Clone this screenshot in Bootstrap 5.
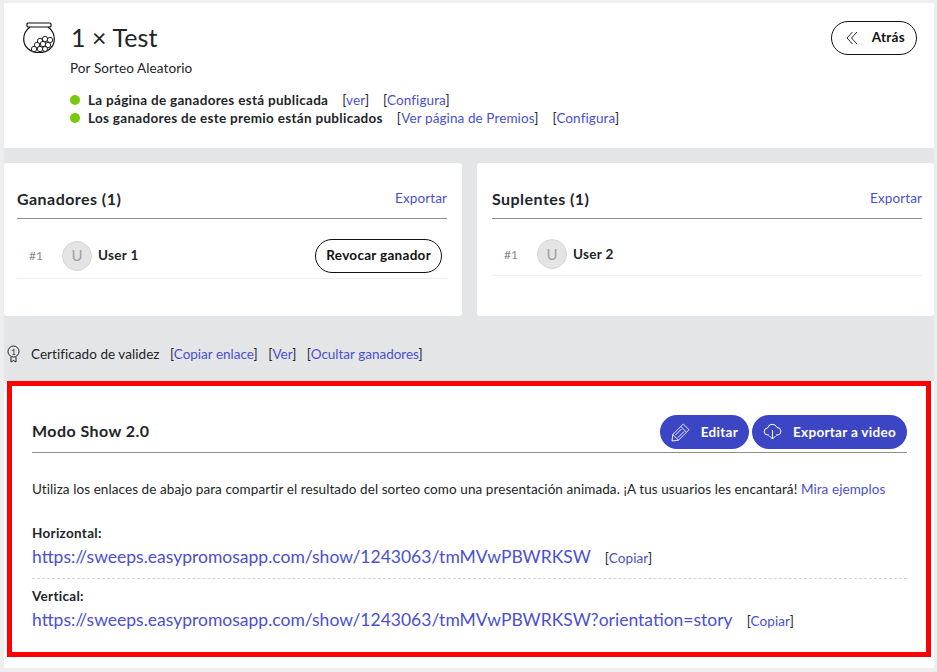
<!DOCTYPE html>
<html lang="es"><head><meta charset="utf-8"><title>Sorteo</title>
<link rel="stylesheet" href="https://cdn.jsdelivr.net/npm/bootstrap@5.3.0/dist/css/bootstrap.min.css">
<style>
html,body{height:100%}
body{background:#eeeeee;font-family:"Lato","Noto Sans",sans-serif;font-size:13.5px;letter-spacing:.1px;line-height:17px;color:#212529;overflow:hidden;padding:3px 3px 0 4px}
a{color:#4a50d0;text-decoration:none}
strong{font-weight:700;letter-spacing:.3px}
.page-wrap{background:#e4e5e7}
.head-panel{background:#fff;height:145px;padding:19px 17px 0 19px}
.title-txt{font-size:25px;line-height:30px;font-weight:400;margin:-2px 0 0}
.by-txt{margin-top:5px;margin-left:47px}
.status-list{margin:14px 0 0 47px}
.dot{width:10px;height:10px;border-radius:50%;background:#7ac70c;margin-right:8px}
.status-row{height:18px}
.link-gap{margin-left:14px}
.btn-out{border:1px solid #111;border-radius:17px;height:34px;background:#fff;color:#111;font-weight:700;letter-spacing:.3px;font-size:13.5px;display:inline-flex;align-items:center;padding:0 10px;line-height:1}
.btn-back{margin-top:-1px;padding:0 11px 0 14px}
.back-ico{margin-right:14px}
.btn-revoke{margin-right:5px}
.cards-row{margin-top:15px;gap:15px}
.w-card{background:#fff;height:153px;border-radius:3px;padding:20px 15px 20px 13px;flex:1 1 0}
.w-card-r{padding:20px 12px 20px 15px}
.sec-head{border-bottom:1px solid #8f8f8f;height:36px;padding-bottom:4px}
.sec-title{font-size:16px;font-weight:700;letter-spacing:.45px;line-height:20px;margin:0}
.win-row{border-bottom:1px solid #eceeef;height:60px;padding-top:14px}
.win-row2{height:57px}
.pos{width:45px;padding-left:12px;color:#8a8a8a;font-size:12px}
.ava{width:30px;height:30px;border-radius:50%;background:#e4e4e4;border:1px solid #d6d6d6;color:#a0a0a0;font-size:15px;margin-right:6px}
.u-name{font-weight:700;letter-spacing:.3px}
.cert-row{height:65px;padding:11px 0 0 3px;letter-spacing:.05px}
.cert-row svg{margin-right:11px}
.cert-link{margin-left:10.5px;letter-spacing:0}
.show-wrap{background:#fff;padding:0 3px 11px}
.show-box{background:#fff;border:5px solid #f00;height:276px;padding:29px 19px 0 20px}
.show-head{border-bottom:1px solid #8f8f8f;height:38px;padding-bottom:5px}
.show-actions{margin-top:2px;gap:3px}
.btn-fill{background:#3c46c4;color:#fff;border-radius:17px;height:34px;font-weight:700;letter-spacing:.3px;display:inline-flex;align-items:center;font-size:13.5px;padding:0 11px;border:0}
.btn-gap{margin-right:11px}
.btn-gap-e{margin-right:10.500px}
.desc{margin-top:28px;letter-spacing:.08px}
.lbl{font-weight:700;letter-spacing:.3px;margin:0 0 4px}
.big-link{font-size:17.5px;line-height:22px;letter-spacing:0}
.url-sep{border-top:1px dashed #d5d5d5;margin-top:10px;padding-top:9px}
.first-url{margin-top:27px}
.copy{margin-left:14px}
</style></head>
<body>
<div class="page-wrap">
<header class="head-panel">
 <div class="d-flex justify-content-between align-items-start">
  <div class="d-flex align-items-center gap-3">
   <svg width="32" height="32" viewBox="0 0 32 32" fill="none" stroke="#111" stroke-width="1.2"><rect x="4" y="1" width="24" height="4" rx="1"/><path d="M7 5C3 8 .7 12 .7 17c0 8 6.300 13.500 15.300 13.500S31.300 25 31.300 17c0-5-2.300-9-6.300-12"/><g stroke-width=".9" fill="#fff"><circle cx="22" cy="17" r="2.700"/><circle cx="27" cy="18" r="2.700"/><circle cx="17" cy="19" r="2.700"/><circle cx="14" cy="23" r="2.700"/><circle cx="20" cy="22" r="2.700"/><circle cx="25" cy="23" r="2.700"/><circle cx="11" cy="27" r="2.700"/><circle cx="17" cy="27" r="2.700"/><circle cx="22" cy="27" r="2.500"/></g></svg>
   <h1 class="title-txt">1 × Test</h1>
  </div>
  <button class="btn-out btn-back"><svg class="back-ico" width="12" height="14" viewBox="0 0 12 14" fill="none" stroke="#111" stroke-width=".9"><path d="M6.500 1 1 7l5.500 6M11 1 5.500 7l5.500 6"/></svg>Atrás</button>
 </div>
 <div class="by-txt">Por Sorteo Aleatorio</div>
 <div class="status-list">
  <div class="d-flex align-items-center status-row"><span class="dot"></span><strong>La página de ganadores está publicada</strong><span class="link-gap">[<a href="#">ver</a>]</span><span class="link-gap">[<a href="#">Configura</a>]</span></div>
  <div class="d-flex align-items-center status-row"><span class="dot"></span><strong>Los ganadores de este premio están publicados</strong><span class="link-gap">[<a href="#">Ver página de Premios</a>]</span><span class="link-gap">[<a href="#">Configura</a>]</span></div>
 </div>
</header>
<div class="d-flex cards-row">
 <section class="w-card">
  <div class="d-flex justify-content-between align-items-center sec-head"><h2 class="sec-title">Ganadores (1)</h2><a href="#">Exportar</a></div>
  <div class="d-flex align-items-center win-row"><span class="pos">#1</span><span class="ava d-flex align-items-center justify-content-center">U</span><span class="u-name flex-grow-1">User 1</span><button class="btn-out btn-revoke">Revocar ganador</button></div>
 </section>
 <section class="w-card w-card-r">
  <div class="d-flex justify-content-between align-items-center sec-head"><h2 class="sec-title">Suplentes (1)</h2><a href="#">Exportar</a></div>
  <div class="d-flex align-items-center win-row win-row2"><span class="pos">#1</span><span class="ava d-flex align-items-center justify-content-center">U</span><span class="u-name">User 2</span></div>
 </section>
</div>
<div class="d-flex align-items-center cert-row">
 <svg width="13" height="18" viewBox="0 0 13 18" fill="none" stroke="#222"><circle cx="6.5" cy="6.5" r="5.5"/><path d="M4 12v5l2.500-1.500L9 17v-5"/><text x="6.500" y="9.500" font-size="8" text-anchor="middle" fill="#222" stroke="none">1</text></svg>
 <span>Certificado de validez</span><span class="cert-link">[<a href="#">Copiar enlace</a>]</span><span class="cert-link">[<a href="#">Ver</a>]</span><span class="cert-link">[<a href="#">Ocultar ganadores</a>]</span>
</div>
<div class="show-wrap">
<section class="show-box">
 <div class="d-flex justify-content-between align-items-center show-head"><h2 class="sec-title">Modo Show 2.0</h2>
  <div class="d-flex show-actions">
   <button class="btn-fill"><svg class="btn-gap-e" width="19" height="19" viewBox="0 0 19 19" fill="none" stroke="#fff" stroke-width=".9"><path d="M1 18l.8-6.500L12.300 1 18 6.700 7.500 17.200zM9.800 3.500l5.700 5.700M1.800 11.500l5.700 5.700M4.500 12l6-6M7 14.500l6-6"/></svg>Editar</button>
   <button class="btn-fill"><svg class="btn-gap" width="19" height="18" viewBox="0 0 19 18" fill="none" stroke="#fff"><path d="M6 12H5a3.500 3.500 0 0 1-.5-7A5 5 0 0 1 14 4.500 3.800 3.800 0 0 1 15 12h-2M9.500 7v9M6.500 13l3 3 3-3"/></svg>Exportar a video</button>
  </div>
 </div>
 <p class="desc mb-0">Utiliza los enlaces de abajo para compartir el resultado del sorteo como una presentación animada. ¡A tus usuarios les encantará! <a href="#">Mira ejemplos</a></p>
 <div class="first-url">
  <p class="lbl">Horizontal:</p>
  <div><a class="big-link" href="#">https://sweeps.easypromosapp.com/show/1243063/tmMVwPBWRKSW</a><span class="copy">[<a href="#">Copiar</a>]</span></div>
 </div>
 <div class="url-sep">
  <p class="lbl">Vertical:</p>
  <div><a class="big-link" href="#">https://sweeps.easypromosapp.com/show/1243063/tmMVwPBWRKSW?orientation=story</a><span class="copy">[<a href="#">Copiar</a>]</span></div>
 </div>
</section>
</div>
</div>
<script src="https://cdn.jsdelivr.net/npm/bootstrap@5.3.0/dist/js/bootstrap.bundle.min.js"></script>
</body></html>
